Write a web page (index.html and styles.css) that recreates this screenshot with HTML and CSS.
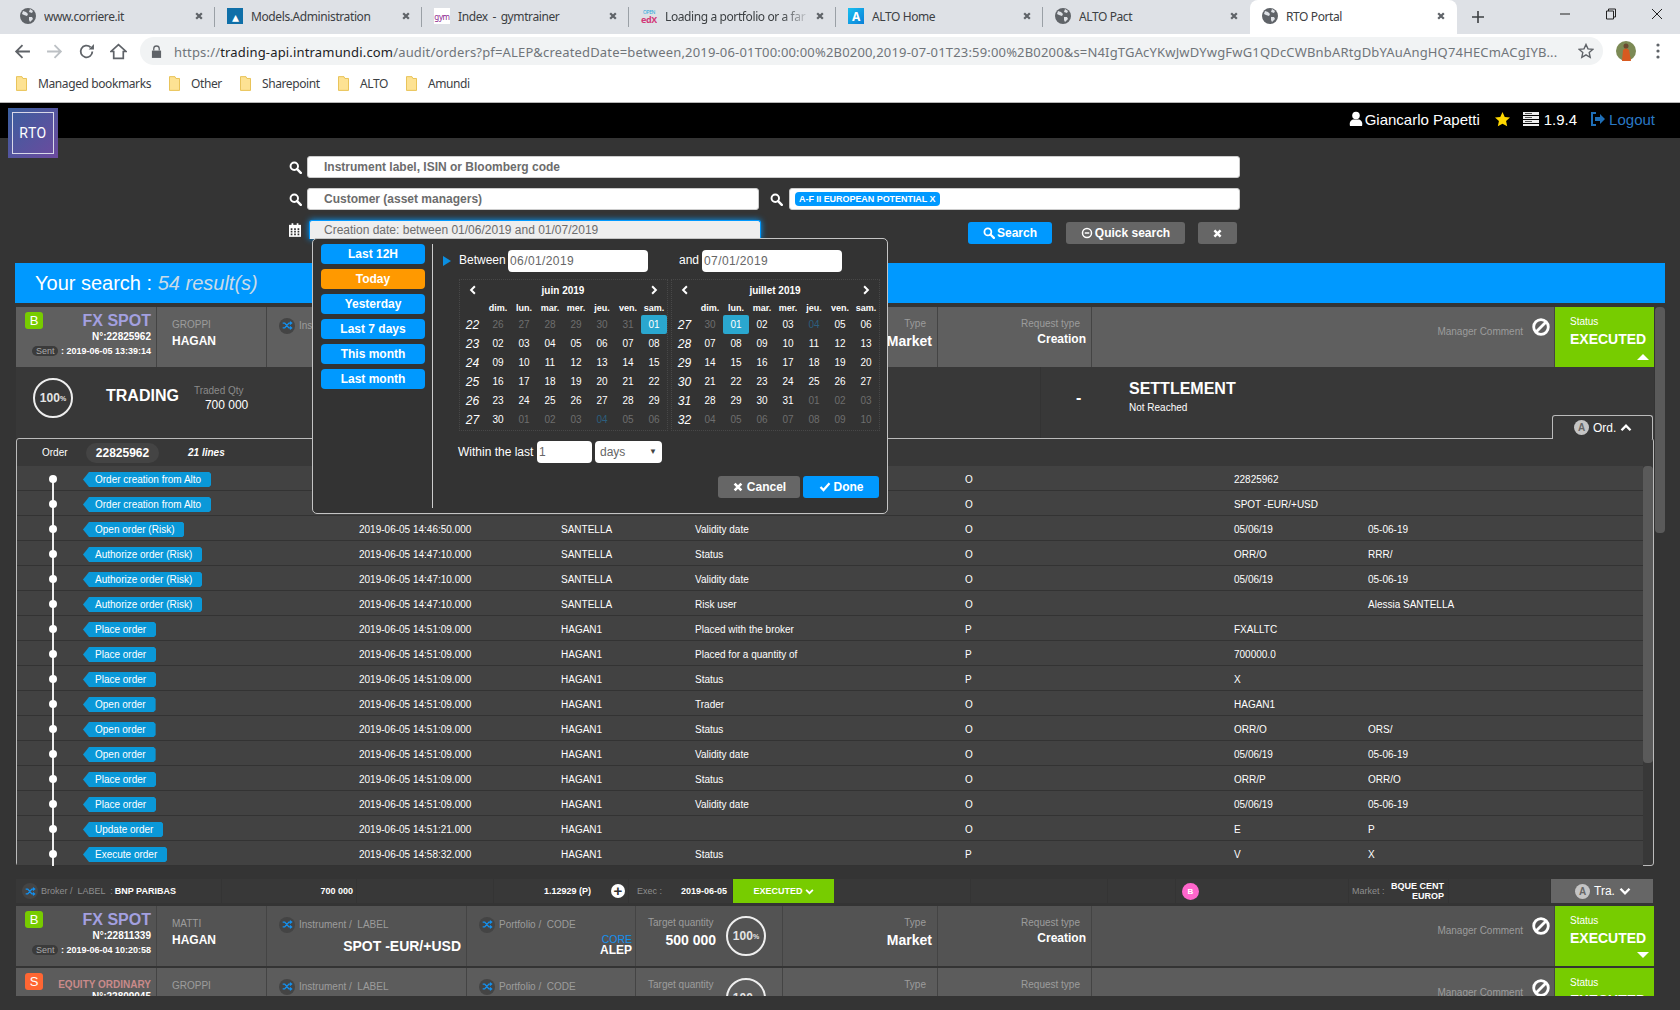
FILE: index.html
```html
<!DOCTYPE html>
<html lang="en">
<head>
  <meta charset="UTF-8" />
  <title>RTO Portal</title>
  <link rel="stylesheet" href="styles.css">
</head>
<body>
  <svg class="sprite" aria-hidden="true">
    <symbol id="i-globe" viewBox="0 0 16 16"><circle cx="8" cy="8" r="8" fill="#5f6368"/><path d="M3 3l3 1 2 2-1 2-3-1-2-1zM9 9l3 0 1 2-3 3-1-2zM10 1l3 2-1 2-3-1z" fill="#dee1e6"/></symbol>
    <symbol id="i-search" viewBox="0 0 16 16"><circle cx="6.5" cy="6.5" r="4.6" fill="none" stroke="currentColor" stroke-width="2.4"/><path d="M10 10l4.5 4.5" stroke="currentColor" stroke-width="3" stroke-linecap="round"/></symbol>
    <symbol id="i-shuffle" viewBox="0 0 16 16"><path d="M1 4.5h3l6 7h2M1 11.5h3l6-7h2" fill="none" stroke="currentColor" stroke-width="2"/><path d="M11.5 1.5l4 3-4 3zM11.5 8.5l4 3-4 3z" fill="currentColor"/></symbol>
    <symbol id="i-ban" viewBox="0 0 18 18"><circle cx="9" cy="9" r="7.3" fill="none" stroke="currentColor" stroke-width="2.8"/><path d="M4 14L14 4" stroke="currentColor" stroke-width="2.8"/></symbol>
    <symbol id="i-down" viewBox="0 0 16 16"><path d="M2 5l6 6 6-6" fill="none" stroke="currentColor" stroke-width="3.2"/></symbol>
    <symbol id="i-up" viewBox="0 0 16 16"><path d="M2 11l6-6 6 6" fill="none" stroke="currentColor" stroke-width="3.2"/></symbol>
    <symbol id="i-left" viewBox="0 0 16 16"><path d="M11 2L5 8l6 6" fill="none" stroke="currentColor" stroke-width="3.2"/></symbol>
    <symbol id="i-right" viewBox="0 0 16 16"><path d="M5 2l6 6-6 6" fill="none" stroke="currentColor" stroke-width="3.2"/></symbol>
    <symbol id="i-times" viewBox="0 0 16 16"><path d="M3.5 3.5l9 9M12.5 3.5l-9 9" stroke="currentColor" stroke-width="3.6"/></symbol>
    <symbol id="i-check" viewBox="0 0 16 16"><path d="M2 8l4 4 8-9" fill="none" stroke="currentColor" stroke-width="3"/></symbol>
    <symbol id="i-folder" viewBox="0 0 12 16"><path d="M.5.5h6l1 2h4v13H.5z" fill="#fde293" stroke="#e6bd4a"/></symbol>
    <symbol id="i-calendar" viewBox="0 0 14 16"><path d="M0 2h14v14H0z" fill="currentColor"/><path d="M2 6h2v2H2zM6 6h2v2H6zM10 6h2v2h-2zM2 9h2v2H2zM6 9h2v2H6zM10 9h2v2h-2zM2 12h2v2H2zM6 12h2v2H6zM10 12h2v2h-2z" fill="#333"/><path d="M3 0h2v3H3zM9 0h2v3H9z" fill="currentColor"/></symbol>
  </svg>

  <div class="browser">
    <div class="tabstrip">
      <div class="tab"><svg class="favicon"><use href="#i-globe"/></svg><span class="tab-title">www.corriere.it</span><svg class="tab-close"><use href="#i-times"/></svg></div>
      <div class="tab"><span class="favicon fav-models">&#9652;</span><span class="tab-title">Models.Administration</span><svg class="tab-close"><use href="#i-times"/></svg></div>
      <div class="tab"><span class="favicon fav-gym">gym</span><span class="tab-title wide">Index - gymtrainer</span><svg class="tab-close"><use href="#i-times"/></svg></div>
      <div class="tab"><span class="favicon fav-edx"><small>OPEN</small><b>edX</b></span><span class="tab-title fade">Loading a portfolio or a far</span><svg class="tab-close"><use href="#i-times"/></svg></div>
      <div class="tab"><span class="favicon fav-alto">A</span><span class="tab-title">ALTO Home</span><svg class="tab-close"><use href="#i-times"/></svg></div>
      <div class="tab no-sep"><svg class="favicon"><use href="#i-globe"/></svg><span class="tab-title">ALTO Pact</span><svg class="tab-close"><use href="#i-times"/></svg></div>
      <div class="tab active"><svg class="favicon"><use href="#i-globe"/></svg><span class="tab-title">RTO Portal</span><svg class="tab-close"><use href="#i-times"/></svg></div>
      <svg class="new-tab" viewBox="0 0 14 14"><path d="M7 1v12M1 7h12" stroke="#3c4043" stroke-width="1.6"/></svg>
      <div class="window-btns">
        <span class="win-btn"><svg viewBox="0 0 12 12"><path d="M1 6h10" stroke="#222" stroke-width="1"/></svg></span>
        <span class="win-btn"><svg viewBox="0 0 12 12"><path d="M3.5 3V1h7v8h-2M1.500 3h7v8h-7z" fill="none" stroke="#222"/></svg></span>
        <span class="win-btn"><svg viewBox="0 0 12 12"><path d="M1 1l10 10M11 1L1 11" stroke="#222"/></svg></span>
      </div>
    </div>
    <div class="toolbar">
      <span class="nav-btn"><svg viewBox="0 0 16 16"><path d="M15 8H2M8 2L2 8l6 6" fill="none" stroke="#5f6368" stroke-width="1.700"/></svg></span>
      <span class="nav-btn"><svg viewBox="0 0 16 16"><path d="M1 8h13M8 2l6 6-6 6" fill="none" stroke="#bcc0c4" stroke-width="1.700"/></svg></span>
      <span class="nav-btn"><svg viewBox="0 0 16 16"><path d="M13.500 8A5.500 5.500 0 1 1 11.800 4" fill="none" stroke="#5f6368" stroke-width="1.700"/><path d="M10 6h5V1z" fill="#5f6368"/></svg></span>
      <span class="nav-btn"><svg viewBox="0 0 16 16"><path d="M8 1.500L1 8h2.500v6.500h9V8H15z" fill="none" stroke="#5f6368" stroke-width="1.600"/></svg></span>
      <div class="omnibox">
        <svg class="lock" viewBox="0 0 12 14"><path d="M3 6V4a3 3 0 0 1 6 0v2" fill="none" stroke="#5f6368" stroke-width="1.400"/><path d="M1 6h10v8H1z" fill="#5f6368"/></svg>
        <span class="url"><span class="url-scheme">https://</span>trading-api.intramundi.com<span class="url-scheme">/audit/orders?pf=ALEP&amp;createdDate=between,2019-06-01T00:00:00%2B0200,2019-07-01T23:59:00%2B0200&amp;s=N4IgTGAcYKwJwDYwgFwG1QDcCWBnbARtgDbYAuAngHQ74HECmACgIYB...</span></span>
        <svg class="bookmark-star" viewBox="0 0 16 16"><path d="M8 1.500l2 4.400 4.800.5-3.600 3.200 1 4.700L8 11.900l-4.200 2.400 1-4.700L1.200 6.400 6 5.900z" fill="none" stroke="#5f6368" stroke-width="1.400"/></svg>
      </div>
      <div class="profile">
        <svg class="avatar" viewBox="0 0 20 20"><circle cx="10" cy="10" r="10" fill="#7c8a55"/><path d="M6 20l1-11 3-2 3 2 2 11z" fill="#d85a20"/><circle cx="10" cy="5" r="2.500" fill="#6a4a30"/></svg>
        <svg class="menu-dots" viewBox="0 0 4 16"><circle cx="2" cy="2" r="1.600" fill="#5f6368"/><circle cx="2" cy="8" r="1.600" fill="#5f6368"/><circle cx="2" cy="14" r="1.600" fill="#5f6368"/></svg>
      </div>
    </div>
    <div class="bookmarks">
      <span class="bm bm-first"><svg><use href="#i-folder"/></svg>Managed bookmarks</span>
      <span class="bm bm-other"><svg><use href="#i-folder"/></svg>Other</span>
      <span class="bm bm-share"><svg><use href="#i-folder"/></svg>Sharepoint</span>
      <span class="bm bm-alto"><svg><use href="#i-folder"/></svg>ALTO</span>
      <span class="bm"><svg><use href="#i-folder"/></svg>Amundi</span>
    </div>
  </div>

  <header class="app-header">
    <svg class="hd-user" viewBox="0 0 14 16"><circle cx="7" cy="4.500" r="3.800" fill="#fff"/><path d="M1 15c-1-4 1-6 3-6.500h6c2 .5 4 2.500 3 6.500z" fill="#fff"/></svg>
    <span class="hd-name">Giancarlo Papetti</span>
    <svg class="hd-star" viewBox="0 0 16 16"><path d="M8 0l2.400 5.200 5.600.6-4.200 3.800 1.200 5.600L8 12.400l-5 2.800 1.200-5.600L0 5.800l5.600-.6z" fill="#ffd800"/></svg>
    <svg class="hd-server" viewBox="0 0 16 14"><path d="M0 0h16v3H0zM0 4h16v3H0zM0 8h16v3H0zM0 12h16v2H0z" fill="#eee"/><path d="M2 1h7v1H2zM2 5h7v1H2zM2 9h7v1H2z" fill="#555"/></svg>
    <span class="hd-version">1.9.4</span>
    <svg class="hd-logout" viewBox="0 0 15 14"><path d="M6 1H2v12h4" fill="none" stroke="#1f6fb8" stroke-width="2"/><path d="M5 5h5V2l5 5-5 5V9H5z" fill="#1f6fb8"/></svg>
    <span class="hd-link">Logout</span>
  </header>
  <div class="logo"><span class="logo-inner">RTO</span></div>

  <main class="page">
    <form class="search-form">
      <div class="search-row">
        <svg class="field-icon"><use href="#i-search"/></svg>
        <div class="field field-wide">Instrument label, ISIN or Bloomberg code</div>
      </div>
      <div class="search-row">
        <svg class="field-icon"><use href="#i-search"/></svg>
        <div class="field field-customer">Customer (asset managers)</div>
        <svg class="field-icon icon-mid"><use href="#i-search"/></svg>
        <div class="field field-portfolio"><span class="chip">A-F II EUROPEAN POTENTIAL X</span></div>
      </div>
      <div class="search-row date-row">
        <svg class="cal-icon"><use href="#i-calendar"/></svg>
        <div class="field-date">Creation date: between 01/06/2019 and 01/07/2019</div>
        <span class="btn btn-blue btn-search"><svg><use href="#i-search"/></svg>Search</span>
        <span class="btn btn-grey btn-quick"><svg viewBox="0 0 16 16"><circle cx="8" cy="8" r="6" fill="none" stroke="currentColor" stroke-width="2"/><path d="M5 8h6" stroke="currentColor" stroke-width="2"/></svg>Quick search</span>
        <span class="btn btn-grey btn-clear"><svg><use href="#i-times"/></svg></span>
      </div>
    </form>

    <div class="result-bar">Your search : <em>54 result(s)</em></div>

    <div class="results">
      <div class="result-list">

        <div class="card card-a">
          <div class="cell cell-type">
            <span class="badge badge-b">B</span>
            <div class="type-name">FX SPOT</div>
            <div class="type-no">N°:22825962</div>
            <div class="type-sent"><span class="sent-pill">Sent</span> : 2019-06-05 13:39:14</div>
          </div>
          <div class="cell cell-person"><div class="muted">GROPPI</div><div class="person">HAGAN</div></div>
          <div class="cell cell-label"><div class="label-row"><span class="shuffle"><svg><use href="#i-shuffle"/></svg></span>Instrument /&nbsp; LABEL</div><div class="instr">SPOT -EUR/+USD</div></div>
          <div class="cell cell-label cell-pf"><div class="label-row"><span class="shuffle"><svg><use href="#i-shuffle"/></svg></span>Portfolio /&nbsp; CODE</div><div class="pf-core">CORE</div><div class="pf-code">ALEP</div></div>
          <div class="cell cell-target"><div class="target-text"><div class="muted">Target quantity</div><div class="target-qty">700 000</div></div><div class="ring">100<small>%</small></div></div>
          <div class="cell cell-right cell-kind"><div class="muted">Type</div><div class="strong">Market</div></div>
          <div class="cell cell-right cell-req"><div class="muted">Request type</div><div class="strong-sm">Creation</div></div>
          <div class="cell cell-comment"><span class="muted">Manager Comment</span><svg class="ban"><use href="#i-ban"/></svg></div>
          <div class="cell cell-status"><div class="status-cap">Status</div><div class="status-val">EXECUTED</div><span class="tri tri-up"></span></div>
        </div>

        <div class="trading">
          <div class="trading-main">
            <div class="ring ring-trading">100<small>%</small></div>
            <div class="trading-name">TRADING</div>
            <div class="traded"><div class="muted">Traded Qty</div><div class="traded-qty">700 000</div></div>
          </div>
          <div class="trading-dash">-</div>
          <div class="trading-settle"><div class="settle-name">SETTLEMENT</div><div class="settle-sub">Not Reached</div></div>
        </div>

        <section class="order-box">
          <div class="box-tab"><span class="circle-a">A</span>Ord.<svg><use href="#i-up"/></svg></div>
          <div class="order-head"><span class="order-cap">Order</span><span class="order-pill">22825962</span><em class="order-lines">21 lines</em></div>
          <div class="order-body">
            <div class="order-rows">
              <div class="orow first"><div class="tl"><i></i></div><div><span class="tag">Order creation from Alto</span></div><div>2019-06-05 13:39:14.000</div><div>HAGAN1</div><div>Order number</div><div>O</div><div>22825962</div><div></div></div>
              <div class="orow"><div class="tl"><i></i></div><div><span class="tag">Order creation from Alto</span></div><div>2019-06-05 13:39:14.000</div><div>HAGAN1</div><div>Instrument</div><div>O</div><div>SPOT -EUR/+USD</div><div></div></div>
              <div class="orow"><div class="tl"><i></i></div><div><span class="tag">Open order (Risk)</span></div><div>2019-06-05 14:46:50.000</div><div>SANTELLA</div><div>Validity date</div><div>O</div><div>05/06/19</div><div>05-06-19</div></div>
              <div class="orow"><div class="tl"><i></i></div><div><span class="tag">Authorize order (Risk)</span></div><div>2019-06-05 14:47:10.000</div><div>SANTELLA</div><div>Status</div><div>O</div><div>ORR/O</div><div>RRR/</div></div>
              <div class="orow"><div class="tl"><i></i></div><div><span class="tag">Authorize order (Risk)</span></div><div>2019-06-05 14:47:10.000</div><div>SANTELLA</div><div>Validity date</div><div>O</div><div>05/06/19</div><div>05-06-19</div></div>
              <div class="orow"><div class="tl"><i></i></div><div><span class="tag">Authorize order (Risk)</span></div><div>2019-06-05 14:47:10.000</div><div>SANTELLA</div><div>Risk user</div><div>O</div><div></div><div>Alessia SANTELLA</div></div>
              <div class="orow"><div class="tl"><i></i></div><div><span class="tag">Place order</span></div><div>2019-06-05 14:51:09.000</div><div>HAGAN1</div><div>Placed with the broker</div><div>P</div><div>FXALLTC</div><div></div></div>
              <div class="orow"><div class="tl"><i></i></div><div><span class="tag">Place order</span></div><div>2019-06-05 14:51:09.000</div><div>HAGAN1</div><div>Placed for a quantity of</div><div>P</div><div>700000.0</div><div></div></div>
              <div class="orow"><div class="tl"><i></i></div><div><span class="tag">Place order</span></div><div>2019-06-05 14:51:09.000</div><div>HAGAN1</div><div>Status</div><div>P</div><div>X</div><div></div></div>
              <div class="orow"><div class="tl"><i></i></div><div><span class="tag">Open order</span></div><div>2019-06-05 14:51:09.000</div><div>HAGAN1</div><div>Trader</div><div>O</div><div>HAGAN1</div><div></div></div>
              <div class="orow"><div class="tl"><i></i></div><div><span class="tag">Open order</span></div><div>2019-06-05 14:51:09.000</div><div>HAGAN1</div><div>Status</div><div>O</div><div>ORR/O</div><div>ORS/</div></div>
              <div class="orow"><div class="tl"><i></i></div><div><span class="tag">Open order</span></div><div>2019-06-05 14:51:09.000</div><div>HAGAN1</div><div>Validity date</div><div>O</div><div>05/06/19</div><div>05-06-19</div></div>
              <div class="orow"><div class="tl"><i></i></div><div><span class="tag">Place order</span></div><div>2019-06-05 14:51:09.000</div><div>HAGAN1</div><div>Status</div><div>O</div><div>ORR/P</div><div>ORR/O</div></div>
              <div class="orow"><div class="tl"><i></i></div><div><span class="tag">Place order</span></div><div>2019-06-05 14:51:09.000</div><div>HAGAN1</div><div>Validity date</div><div>O</div><div>05/06/19</div><div>05-06-19</div></div>
              <div class="orow"><div class="tl"><i></i></div><div><span class="tag">Update order</span></div><div>2019-06-05 14:51:21.000</div><div>HAGAN1</div><div></div><div>O</div><div>E</div><div>P</div></div>
              <div class="orow"><div class="tl"><i></i></div><div><span class="tag">Execute order</span></div><div>2019-06-05 14:58:32.000</div><div>HAGAN1</div><div>Status</div><div>P</div><div>V</div><div>X</div></div>
            </div>
            <div class="order-scroll"><div class="order-thumb"></div></div>
          </div>
        </section>

        <div class="broker-row">
          <div class="bcell"><span class="shuffle"><svg><use href="#i-shuffle"/></svg></span><span class="bmuted">Broker /&nbsp; LABEL &nbsp;:</span><b class="bname">BNP PARIBAS</b></div>
          <div class="bcell bcell-end"><b>700 000</b></div>
          <div class="bcell"></div>
          <div class="bcell bcell-end bcell-price"><b>1.12929 (P)</b><span class="plus">+</span></div>
          <div class="bcell bcell-exec"><span class="bmuted">Exec :</span><b class="bdate">2019-06-05</b></div>
          <div class="bexec">EXECUTED<svg><use href="#i-down"/></svg></div>
          <div class="bcell"></div>
          <div class="bcell"></div>
          <div class="bcell"></div>
          <div class="bcell"><span class="pink">B</span></div>
          <div class="bcell bcell-market"><span class="bmuted">Market :</span><b>BQUE CENT<br>EUROP</b></div>
          <div class="bcell"></div>
          <div class="btra"><span class="circle-a">A</span>Tra.<svg><use href="#i-down"/></svg></div>
        </div>

        <div class="card card-b">
          <div class="cell cell-type">
            <span class="badge badge-b">B</span>
            <div class="type-name">FX SPOT</div>
            <div class="type-no">N°:22811339</div>
            <div class="type-sent"><span class="sent-pill">Sent</span> : 2019-06-04 10:20:58</div>
          </div>
          <div class="cell cell-person"><div class="muted">MATTI</div><div class="person">HAGAN</div></div>
          <div class="cell cell-label"><div class="label-row"><span class="shuffle"><svg><use href="#i-shuffle"/></svg></span>Instrument /&nbsp; LABEL</div><div class="instr">SPOT -EUR/+USD</div></div>
          <div class="cell cell-label cell-pf"><div class="label-row"><span class="shuffle"><svg><use href="#i-shuffle"/></svg></span>Portfolio /&nbsp; CODE</div><div class="pf-core">CORE</div><div class="pf-code">ALEP</div></div>
          <div class="cell cell-target"><div class="target-text"><div class="muted">Target quantity</div><div class="target-qty">500 000</div></div><div class="ring">100<small>%</small></div></div>
          <div class="cell cell-right cell-kind"><div class="muted">Type</div><div class="strong">Market</div></div>
          <div class="cell cell-right cell-req"><div class="muted">Request type</div><div class="strong-sm">Creation</div></div>
          <div class="cell cell-comment"><span class="muted">Manager Comment</span><svg class="ban"><use href="#i-ban"/></svg></div>
          <div class="cell cell-status"><div class="status-cap">Status</div><div class="status-val">EXECUTED</div><span class="tri tri-down"></span></div>
        </div>

        <div class="card card-c">
          <div class="cell cell-type">
            <span class="badge badge-s">S</span>
            <div class="type-name type-equity">EQUITY ORDINARY</div>
            <div class="type-no">N°:22809045</div>
          </div>
          <div class="cell cell-person"><div class="muted">GROPPI</div><div class="person">HAGAN</div></div>
          <div class="cell cell-label"><div class="label-row"><span class="shuffle"><svg><use href="#i-shuffle"/></svg></span>Instrument /&nbsp; LABEL</div></div>
          <div class="cell cell-label cell-pf"><div class="label-row"><span class="shuffle"><svg><use href="#i-shuffle"/></svg></span>Portfolio /&nbsp; CODE</div></div>
          <div class="cell cell-target"><div class="target-text"><div class="muted">Target quantity</div></div><div class="ring">100<small>%</small></div></div>
          <div class="cell cell-right cell-kind"><div class="muted">Type</div></div>
          <div class="cell cell-right cell-req"><div class="muted">Request type</div></div>
          <div class="cell cell-comment"><span class="muted">Manager Comment</span><svg class="ban"><use href="#i-ban"/></svg></div>
          <div class="cell cell-status"><div class="status-cap">Status</div><div class="status-val">EXECUTED</div></div>
        </div>

      </div>
      <div class="page-scroll"></div>
    </div>
  </main>

  <div class="date-popup">
    <div class="presets">
      <span class="preset">Last 12H</span>
      <span class="preset preset-on">Today</span>
      <span class="preset">Yesterday</span>
      <span class="preset">Last 7 days</span>
      <span class="preset">This month</span>
      <span class="preset">Last month</span>
    </div>
    <div class="popup-main">
      <div class="between-row">
        <span class="arrow"></span>
        <span class="between-cap">Between</span>
        <span class="date-input">06/01/2019</span>
        <span class="and-cap">and</span>
        <span class="date-input">07/01/2019</span>
      </div>
      <div class="calendars">
        <div class="cal">
          <span class="cal-nav"><svg><use href="#i-left"/></svg></span><span class="cal-title">juin 2019</span><span class="cal-nav"><svg><use href="#i-right"/></svg></span>
          <span></span><b>dim.</b><b>lun.</b><b>mar.</b><b>mer.</b><b>jeu.</b><b>ven.</b><b>sam.</b>
          <em>22</em><span class="off">26</span><span class="off">27</span><span class="off">28</span><span class="off">29</span><span class="off">30</span><span class="off">31</span><span class="sel">01</span>
          <em>23</em><span>02</span><span>03</span><span>04</span><span>05</span><span>06</span><span>07</span><span>08</span>
          <em>24</em><span>09</span><span>10</span><span>11</span><span>12</span><span>13</span><span>14</span><span>15</span>
          <em>25</em><span>16</span><span>17</span><span>18</span><span>19</span><span>20</span><span>21</span><span>22</span>
          <em>26</em><span>23</span><span>24</span><span>25</span><span>26</span><span>27</span><span>28</span><span>29</span>
          <em>27</em><span>30</span><span class="off">01</span><span class="off">02</span><span class="off">03</span><span class="off today">04</span><span class="off">05</span><span class="off">06</span>
        </div>
        <div class="cal">
          <span class="cal-nav"><svg><use href="#i-left"/></svg></span><span class="cal-title">juillet 2019</span><span class="cal-nav"><svg><use href="#i-right"/></svg></span>
          <span></span><b>dim.</b><b>lun.</b><b>mar.</b><b>mer.</b><b>jeu.</b><b>ven.</b><b>sam.</b>
          <em>27</em><span class="off">30</span><span class="sel">01</span><span>02</span><span>03</span><span class="off today">04</span><span>05</span><span>06</span>
          <em>28</em><span>07</span><span>08</span><span>09</span><span>10</span><span>11</span><span>12</span><span>13</span>
          <em>29</em><span>14</span><span>15</span><span>16</span><span>17</span><span>18</span><span>19</span><span>20</span>
          <em>30</em><span>21</span><span>22</span><span>23</span><span>24</span><span>25</span><span>26</span><span>27</span>
          <em>31</em><span>28</span><span>29</span><span>30</span><span>31</span><span class="off">01</span><span class="off">02</span><span class="off">03</span>
          <em>32</em><span class="off">04</span><span class="off">05</span><span class="off">06</span><span class="off">07</span><span class="off">08</span><span class="off">09</span><span class="off">10</span>
        </div>
      </div>
      <div class="within-row">
        <span class="within-cap">Within the last</span>
        <span class="within-input">1</span>
        <span class="within-select">days<i>&#9660;</i></span>
      </div>
      <div class="popup-actions">
        <span class="btn btn-grey btn-cancel"><svg><use href="#i-times"/></svg>Cancel</span>
        <span class="btn btn-blue btn-done"><svg><use href="#i-check"/></svg>Done</span>
      </div>
    </div>
  </div>
</body>
</html>
```
FILE: styles.css
```css
* { box-sizing: border-box; }
html, body { margin: 0; padding: 0; }
body { width: 1680px; height: 1010px; overflow: hidden; position: relative; background: #343434; color: #fff; font-family: "Liberation Sans", Arial, sans-serif; font-size: 10px; }
.sprite { display: none; }

/* browser chrome */
.browser { font-family: "Noto Sans", "Open Sans", sans-serif; color: #3c4043; }
.tabstrip { height: 34px; background: #dee1e6; display: flex; align-items: center; padding-left: 8px; }
.tab { width: 207px; height: 34px; display: flex; align-items: center; padding: 0 7px 2px 12px; font-size: 12px; letter-spacing: -.4px; background: linear-gradient(#9aa0a6, #9aa0a6) no-repeat right center / 1px 20px; }
.tab.no-sep { background: none; }
.tab.active { background: #fff; border-radius: 8px 8px 0 0; }
.favicon { width: 16px; height: 16px; flex: none; margin-right: 8px; display: flex; align-items: center; justify-content: center; overflow: hidden; }
.fav-models { background: #0f6fa8; color: #fff; font-size: 14px; }
.fav-gym { background: #fff; color: #8a1a8c; font-size: 8px; }
.fav-edx { flex-direction: column; line-height: 7px; color: #d23a7a; font-size: 9px; }
.fav-edx small { font-size: 5px; color: #28a8dc; }
.fav-alto { background: linear-gradient(135deg, #19c0f0, #0a7fd8); color: #fff; font-weight: bold; font-size: 12px; }
.tab-title { flex: 1; white-space: nowrap; overflow: hidden; }
.tab-title.wide { word-spacing: 2px; }
.tab-title.fade { -webkit-mask-image: linear-gradient(90deg, #000 80%, transparent); mask-image: linear-gradient(90deg, #000 80%, transparent); }
.tab-close { width: 10px; height: 10px; flex: none; color: #5f6368; margin: 0 4px 0 4px; }
.new-tab { width: 14px; height: 14px; margin-left: 14px; flex: none; }
.window-btns { margin-left: auto; display: flex; }
.win-btn { width: 46px; display: flex; justify-content: center; margin-top: -6px; }
.win-btn svg { width: 12px; height: 12px; }

.toolbar { height: 34px; background: #fff; display: flex; align-items: center; padding-left: 6px; }
.nav-btn { width: 32px; display: flex; justify-content: center; }
.nav-btn svg { width: 17px; height: 17px; }
.omnibox { margin-left: 6px; width: 1463px; height: 28px; border-radius: 14px; background: #f1f3f4; display: flex; align-items: center; padding: 0 9px 0 11px; }
.lock { width: 11px; height: 13px; flex: none; margin-right: 12px; }
.url { flex: 1; font-size: 13px; letter-spacing: .17px; line-height: 18px; padding-top: 1px; white-space: nowrap; overflow: hidden; color: #202124; }
.url-scheme { color: #70757a; }
.bookmark-star { width: 16px; height: 16px; flex: none; }
.profile { display: flex; align-items: center; padding-left: 13px; }
.avatar { width: 20px; height: 20px; }
.menu-dots { width: 4px; height: 16px; margin-left: 20px; }

.bookmarks { height: 35px; background: #fff; border-bottom: 1px solid #b6b6b6; display: flex; align-items: center; padding: 0 0 3px 16px; font-size: 12px; letter-spacing: -.4px; }
.bm { display: flex; align-items: center; }
.bm svg { width: 11px; height: 15px; margin-right: 11px; }
.bm-first { width: 153px; }
.bm-other { width: 71px; }
.bm-share { width: 98px; }
.bm-alto { width: 68px; }

/* app header */
.app-header { height: 35px; background: #000; display: flex; align-items: center; justify-content: flex-end; padding: 0 25px 3px 0; font-size: 15px; }
.hd-user { width: 14px; height: 16px; margin-right: 2px; }
.hd-star { width: 15px; height: 15px; margin: 0 13px 0 15px; }
.hd-server { width: 16px; height: 14px; margin-right: 5px; }
.hd-logout { width: 15px; height: 14px; margin: 0 4px 0 13px; }
.hd-link { color: #2a78c4; }

.logo { position: absolute; left: 8px; top: 108px; width: 50px; height: 50px; padding: 4px; background: linear-gradient(135deg, #3a5f9f, #6d4a9e); }
.logo-inner { display: flex; height: 100%; align-items: center; justify-content: center; border: 1px solid #d8d8e8; font-family: Roboto, sans-serif; font-size: 14px; letter-spacing: .5px; }

/* search form */
.page { padding: 18px 15px 0; }
.search-form { padding-left: 274px; }
.search-row { display: flex; align-items: center; height: 22px; margin-bottom: 10px; }
.field-icon { width: 13px; height: 13px; color: #fff; margin-right: 5px; flex: none; }
.icon-mid { margin: 0 6px 0 11px; }
.field { height: 22px; background: #fff; border: 1px solid #ccc; border-radius: 3px; color: #6c6c6c; font-size: 12px; font-weight: bold; display: flex; align-items: center; padding-left: 16px; }
.field-wide { width: 933px; }
.field-customer { width: 452px; }
.field-portfolio { width: 451px; padding-left: 5px; }
.chip { background: #0099ff; color: #fff; font-size: 9px; height: 14px; line-height: 14px; border-radius: 4px; padding: 0 4px; letter-spacing: -.05px; }
.date-row { height: 24px; margin-bottom: 0; align-items: flex-start; }
.cal-icon { width: 12px; height: 14px; margin: 3px 8px 0 0; color: #fff; flex: none; }
.field-date { width: 452px; height: 19px; line-height: 18px; background: #eee; color: #6c6c6c; font-size: 12px; padding-left: 14px; border: 1px solid #0099ff; border-bottom: none; border-radius: 3px 3px 0 0; box-shadow: 0 0 6px #0099ff; }
.btn { display: inline-flex; align-items: center; justify-content: center; height: 22px; border-radius: 3px; color: #fff; font-size: 12px; font-weight: bold; }
.btn svg { width: 12px; height: 12px; margin-right: 2px; flex: none; }
.btn-blue { background: #0099ff; }
.btn-grey { background: #666; }
.btn-search { width: 84px; margin: 2px 0 0 207px; }
.btn-quick { width: 119px; margin: 2px 0 0 14px; }
.btn-clear { width: 39px; margin: 2px 0 0 13px; }
.btn-clear svg { margin: 0; width: 11px; height: 11px; }

.result-bar { margin-top: 19px; height: 40px; background: #0099ff; font-size: 20px; line-height: 40px; padding-left: 20px; }
.result-bar em { color: #c9dbe8; }

/* result cards */
.results { display: flex; margin-top: 4px; height: 689px; padding-left: 1px; }
.result-list { width: 1638px; height: 689px; overflow: hidden; flex: none; }
.page-scroll { width: 10px; height: 226px; margin-left: 1px; background: #5a5a5a; border-radius: 4px; }
.card { display: grid; grid-template-columns: 141px 110px 200px 169px 147px 155px 154px 463px 99px; height: 60px; margin-bottom: 2px; }
.card-a { background: #5f5f5f; margin-bottom: 0; }
.card-b { background: #535353; }
.card-c { background: #5c5c5c; }
.cell { border-right: 1px solid #444; height: 60px; overflow: hidden; }
.muted { color: #9c9c9c; font-size: 10px; line-height: 14px; }
.cell-type { padding: 5px 5px 0 9px; text-align: right; }
.badge { float: left; width: 18px; height: 17px; border-radius: 3px; font-size: 13px; line-height: 17px; text-align: center; }
.badge-b { background: #77cc00; }
.badge-s { background: #ff6633; }
.type-name { color: #a3a0e0; font-size: 16px; font-weight: bold; line-height: 18px; white-space: nowrap; }
.type-equity { color: #c98a8a; font-size: 10px; line-height: 24px; margin-bottom: -7px; }
.type-no { font-weight: bold; font-size: 10px; line-height: 14px; }
.type-sent { font-size: 9px; font-weight: bold; line-height: 14px; white-space: nowrap; }
.sent-pill { background: #3b3b3b; color: #aaa; font-weight: normal; font-size: 9px; border-radius: 7px; padding: 0 4px; }
.cell-person { padding: 11px 0 0 15px; }
.person { font-size: 12px; font-weight: bold; line-height: 14px; margin-top: 2px; }
.cell-label { padding: 10px 5px 0 12px; }
.cell-pf { padding: 10px 3px 0 12px; }
.label-row { display: flex; align-items: center; height: 17px; color: #9c9c9c; font-size: 10px; white-space: nowrap; }
.shuffle { width: 16px; height: 16px; border-radius: 50%; background: #444; display: inline-flex; align-items: center; justify-content: center; color: #1390ef; margin-right: 4px; flex: none; }
.shuffle svg { width: 11px; height: 11px; }
.instr { text-align: right; font-size: 14px; font-weight: bold; line-height: 16px; margin-top: 5px; white-space: nowrap; }
.pf-core { text-align: right; color: #1390ef; font-size: 10.5px; line-height: 12px; }
.pf-code { text-align: right; font-size: 12px; font-weight: bold; line-height: 12px; margin-top: -1px; }
.cell-target { display: flex; padding: 10px 0 0 12px; }
.target-text { width: 68px; white-space: nowrap; }
.target-qty { text-align: right; font-size: 14px; font-weight: bold; line-height: 20px; }
.ring { width: 40px; height: 40px; border: 2px solid #eee; border-radius: 50%; margin-left: 10px; display: flex; align-items: center; justify-content: center; font-size: 12px; font-weight: bold; color: #e4e4e4; flex: none; }
.ring small { font-size: 7px; }
.cell-right { text-align: right; padding-top: 10px; }
.cell-kind { padding-right: 5px; }
.cell-kind .muted { padding-right: 6px; }
.cell-req { padding-right: 5px; }
.cell-req .muted { padding-right: 6px; }
.strong { font-size: 14px; font-weight: bold; line-height: 20px; }
.strong-sm { font-size: 12px; font-weight: bold; line-height: 16px; }
.cell-comment { display: flex; justify-content: flex-end; padding: 11px 4px 0 0; }
.cell-comment .muted { padding-top: 7px; }
.ban { width: 18px; height: 18px; color: #fff; margin-left: 9px; }
.cell-status { background: #77cc00; border-right: none; padding: 9px 5px 0 15px; display: flex; flex-direction: column; }
.status-cap { font-size: 10px; line-height: 12px; }
.status-val { font-size: 14px; font-weight: bold; line-height: 16px; margin-top: 3px; }
.tri { width: 0; height: 0; align-self: flex-end; margin-top: 6px; border-left: 6px solid transparent; border-right: 6px solid transparent; }
.tri-up { border-bottom: 6px solid #fff; margin-top: 7px; }
.tri-down { border-top: 6px solid #fff; }

/* trading line */
.trading { display: grid; grid-template-columns: 1024px 89px 1fr; height: 71px; background: #383838; }
.trading-main { display: flex; padding: 11px 0 0 17px; }
.ring-trading { margin: 0; }
.trading-name { font-size: 16px; font-weight: bold; margin: 9px 0 0 33px; line-height: 18px; }
.traded { margin: 6px 0 0 15px; }
.traded .muted { color: #8a8a8a; }
.traded-qty { font-size: 12px; line-height: 16px; margin: -1px 0 0 11px; }
.trading-dash { border-left: 1px solid #333; font-size: 16px; font-weight: bold; padding: 22px 0 0 35px; }
.settle-name { font-size: 16px; font-weight: bold; line-height: 18px; margin-top: 13px; }
.settle-sub { font-size: 10px; line-height: 14px; margin-top: 3px; }

/* order box */
.order-box { position: relative; height: 428px; background: #383838; border: 1px solid #bbb; border-radius: 3px; margin-bottom: 13px; width: 1638px; }
.box-tab { position: absolute; right: 0; top: -24px; width: 101px; height: 24px; background: #383838; border: 1px solid #bbb; border-bottom: none; border-radius: 3px 3px 0 0; font-size: 12px; display: flex; align-items: center; padding-left: 21px; }
.box-tab svg, .btra svg { width: 12px; height: 12px; margin-left: 4px; }
.circle-a { width: 15px; height: 15px; border-radius: 50%; background: #c4c4c4; color: #666; font-size: 10px; font-weight: bold; display: inline-flex; align-items: center; justify-content: center; margin-right: 4px; }
.order-head { height: 27px; display: flex; align-items: center; }
.order-cap { margin-left: 25px; width: 44px; font-size: 10px; }
.order-pill { background: #444; border-radius: 10px; height: 20px; line-height: 20px; width: 73px; text-align: center; font-size: 12px; font-weight: bold; }
.order-lines { margin-left: 29px; font-size: 10px; font-weight: bold; }
.order-body { display: flex; height: 400px; }
.order-rows { width: 1626px; flex: none; }
.orow { display: grid; grid-template-columns: 66px 276px 202px 134px 270px 269px 134px 1fr; height: 25px; padding-top: 2px; background: #424242; border-bottom: 1px solid #333; align-items: center; font-size: 10px; white-space: nowrap; }
.tl { height: 25px; align-self: start; margin-top: -2px; display: flex; align-items: center; padding-left: 32px; background: linear-gradient(#eee, #eee) no-repeat 35px 0 / 2px 100%; }
.orow.first .tl { background-position: 35px 12px; }
.tl i { width: 8px; height: 8px; border-radius: 50%; background: #fff; }
.tag { display: inline-block; height: 15px; line-height: 15px; background: #0a98d8; padding: 0 10px 0 12px; clip-path: polygon(6px 0, calc(100% - 2px) 0, 100% 2px, 100% calc(100% - 2px), calc(100% - 2px) 100%, 6px 100%, 0 50%); }
.order-scroll { flex: 1; }
.order-thumb { width: 10px; height: 297px; background: #5a5a5a; border-radius: 4px; }

/* broker line */
.broker-row { display: grid; grid-template-columns: 206px 135px 137px 135px 104px 101px 137px 137px 68px 173px 100px 102px 103px; height: 24px; margin-bottom: 3px; font-size: 9px; }
.bcell { background: #383838; border-right: 1px solid #343434; display: flex; align-items: center; padding-left: 6px; white-space: nowrap; }
.bcell .shuffle { margin-right: 3px; }
.bmuted { color: #8e8e8e; font-size: 9px; }
.bname { margin-left: 2px; }
.bcell-end { justify-content: flex-end; padding-right: 3px; }
.bcell-price { padding-right: 3px; }
.bcell-exec { padding-left: 8px; }
.plus { width: 14px; height: 14px; margin-left: 20px; background: #fff; color: #333; border-radius: 50%; font-size: 15px; font-weight: bold; line-height: 14px; text-align: center; }
.bdate { margin-left: 19px; }
.bexec { background: #77cc00; font-weight: bold; display: flex; align-items: center; justify-content: center; }
.bexec svg { width: 9px; height: 9px; margin-left: 2px; }
.pink { width: 17px; height: 17px; border-radius: 50%; background: #ff66cc; font-size: 8px; font-weight: bold; text-align: center; line-height: 17px; }
.bcell-market { justify-content: space-between; padding: 0 4px 0 3px; text-align: right; line-height: 10px; }
.btra { background: #666; font-size: 12px; display: flex; align-items: center; padding-left: 24px; width: 102px; }

/* date popup */
.date-popup { position: absolute; left: 312px; top: 238px; width: 576px; height: 276px; background: #333; border: 1px solid #c4c4c4; border-radius: 5px; display: flex; padding: 5px 0 5px 8px; font-size: 12px; }
.presets { width: 104px; display: flex; flex-direction: column; gap: 5px; flex: none; }
.preset { height: 20px; line-height: 20px; background: #0099ff; border-radius: 4px; font-weight: bold; text-align: center; }
.preset-on { background: #ff9900; }
.popup-main { margin-left: 7px; border-left: 1px solid #ccc; width: 454px; padding-left: 10px; }
.between-row { display: flex; align-items: center; height: 22px; margin-top: 6px; }
.arrow { width: 0; height: 0; border-left: 8px solid #0b8ee0; border-top: 5px solid transparent; border-bottom: 5px solid transparent; margin-right: 8px; }
.between-cap { width: 49px; margin-top: -2px; }
.date-input { width: 140px; height: 22px; background: #fff; border-radius: 4px; color: #666; line-height: 22px; padding-left: 2px; letter-spacing: .4px; }
.and-cap { width: 23px; margin: -2px 0 0 31px; }
.calendars { display: flex; gap: 3px; margin: 7px 0 0 16px; }
.cal { width: 209px; height: 152px; border: 1px dotted #484848; display: grid; grid-template-columns: 25px repeat(7, 26px); grid-auto-rows: 19px; grid-template-rows: 21px 14px; justify-items: center; align-items: center; font-size: 10px; }
.cal > span, .cal > b, .cal > em { width: 26px; text-align: center; }
.cal b { font-size: 9px; }
.cal em { font-size: 12px; }
.cal .cal-title { grid-column: span 6; width: auto; font-weight: bold; }
.cal-nav svg { width: 10px; height: 10px; color: #fff; }
.cal .off { color: #6e6e6e; }
.cal .today { color: #2c5f7e; }
.cal .sel { background: #2aa7cf; height: 19px; line-height: 19px; border-radius: 2px; }
.within-row { display: flex; align-items: center; height: 22px; margin-top: 10px; padding-left: 15px; }
.within-cap { width: 79px; white-space: nowrap; }
.within-input { width: 55px; height: 22px; line-height: 22px; padding-left: 2px; background: #fff; color: #666; border-radius: 4px; }
.within-select { width: 67px; height: 22px; line-height: 22px; margin-left: 3px; padding: 0 5px; background: #fff; color: #666; border-radius: 4px; display: flex; justify-content: space-between; }
.within-select i { font-style: normal; font-size: 8px; color: #444; }
.popup-actions { display: flex; justify-content: flex-end; gap: 3px; margin-top: 13px; padding-right: 7px; }
.btn-cancel { width: 82px; }
.btn-done { width: 76px; }
.btn-cancel svg, .btn-done svg { margin-right: 3px; }
```
